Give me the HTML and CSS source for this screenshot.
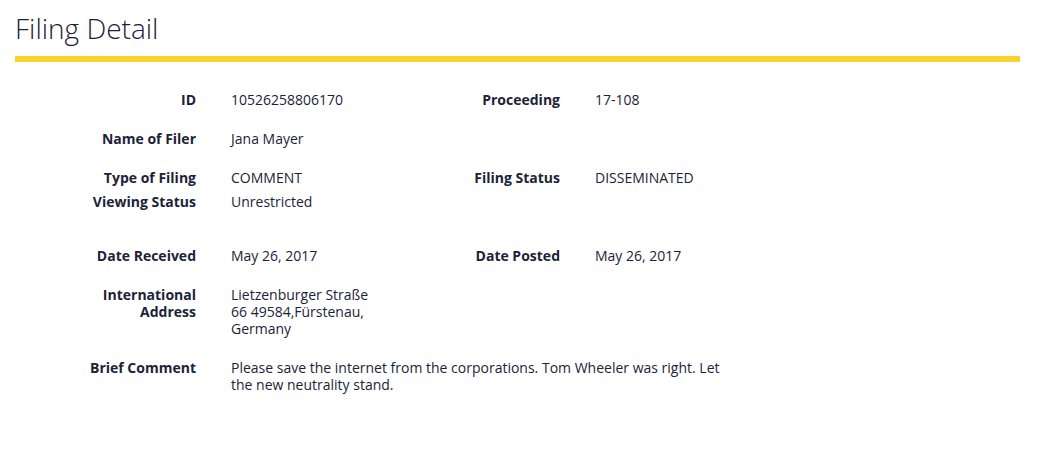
FILE: index.html
```html
<!DOCTYPE html>
<html lang="en">
  <head>
    <meta charset="UTF-8" />
    <meta name="viewport" content="width=device-width, initial-scale=1.0" />
    <title>Filing Detail</title>
    <link rel="stylesheet" href="styles.css">
  </head>
  <body>
    <div class="page">
      <h1 class="page-title">Filing Detail</h1>

      <div class="details">
        <div class="row">
          <div class="label">ID</div>
          <div class="value">10526258806170</div>
          <div class="label">Proceeding</div>
          <div class="value">17-108</div>
        </div>

        <div class="row">
          <div class="label">Name of Filer</div>
          <div class="value">Jana Mayer</div>
        </div>

        <div class="row row--joined">
          <div class="label">Type of Filing</div>
          <div class="value">COMMENT</div>
          <div class="label">Filing Status</div>
          <div class="value">DISSEMINATED</div>
        </div>

        <div class="row row--group-end">
          <div class="label">Viewing Status</div>
          <div class="value">Unrestricted</div>
        </div>

        <div class="row">
          <div class="label">Date Received</div>
          <div class="value">May 26, 2017</div>
          <div class="label">Date Posted</div>
          <div class="value">May 26, 2017</div>
        </div>

        <div class="row">
          <div class="label">International Address</div>
          <div class="value">Lietzenburger Straße 66 49584,Fürstenau, Germany</div>
        </div>

        <div class="row">
          <div class="label">Brief Comment</div>
          <div class="value value--wide">Please save the internet from the corporations. Tom Wheeler was right. Let the new neutrality stand.</div>
        </div>
      </div>
    </div>
  </body>
</html>
```

FILE: styles.css
```css
body {
  margin: 0;
  font-family: "Open Sans", "Liberation Sans", sans-serif;
  color: #1c2337;
  background-color: #ffffff;
}
.page {
  padding: 10px 29px 0 15px;
}
.page-title {
  margin: 0;
  font-size: 28px;
  font-weight: 300;
  line-height: 36px;
  padding-bottom: 10px;
  border-bottom: 6px solid #fdd12d;
}
.details {
  margin-top: 29px;
  padding-left: 61px;
  font-size: 14px;
  line-height: 17px;
}
.row {
  display: grid;
  grid-template-columns: 120px 150px 144px 1fr;
  column-gap: 35px;
  margin-bottom: 22px;
}
.row--joined {
  margin-bottom: 7px;
}
.row--group-end {
  margin-bottom: 37px;
}
.label {
  font-weight: 700;
  text-align: right;
}
.value--wide {
  grid-column: 2 / -1;
  max-width: 500px;
}
```
